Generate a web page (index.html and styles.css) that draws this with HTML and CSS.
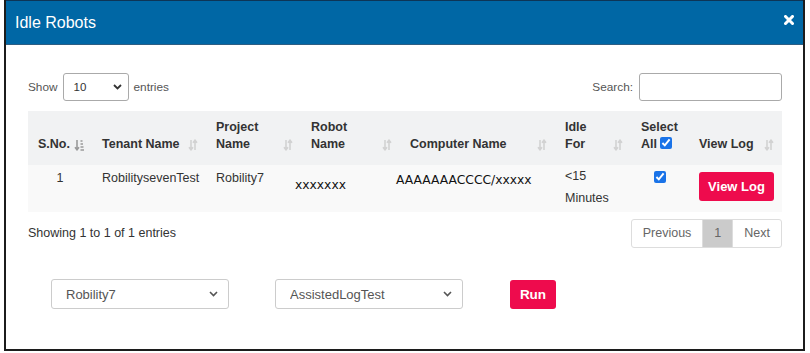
FILE: index.html
```html
<!DOCTYPE html>
<html lang="en">
<head>
    <meta charset="UTF-8">
    <meta name="viewport" content="width=device-width, initial-scale=1.0">
    <title>Idle Robots</title>
    <link rel="stylesheet" href="styles.css">
</head>
<body>
    <div class="modal">
        <div class="modal-header">
            <h4 class="modal-title">Idle Robots</h4>
            <button class="close-btn" aria-label="Close">
                <svg width="10" height="10" viewBox="0 0 10 10"><path d="M1.5 1.5 L8.5 8.5 M8.5 1.5 L1.5 8.5" stroke="#fff" stroke-width="3" stroke-linecap="square"/></svg>
            </button>
        </div>
        <div class="modal-body">
            <div class="dt-top">
                <label class="dt-length">Show
                    <span class="select-wrap small">
                        <select><option>10</option><option>25</option><option>50</option></select>
                        <svg class="chevron" width="9" height="6" viewBox="0 0 9 6"><path d="M1 1 L4.5 4.5 L8 1" fill="none" stroke="#333" stroke-width="1.8"/></svg>
                    </span>
                    entries</label>
                <label class="dt-search">Search: <input type="search"></label>
            </div>

            <table class="robots-table">
                <colgroup>
                    <col style="width:64px"><col style="width:114px"><col style="width:95px"><col style="width:99px">
                    <col style="width:155px"><col style="width:76px"><col style="width:58px"><col style="width:93px">
                </colgroup>
                <thead>
                    <tr>
                        <th>S.No.<svg class="sort" width="10" height="12" viewBox="0 0 10 12"><path d="M3 1 V10.5 M1 8.3 L3 10.8 L5 8.3" fill="none" stroke="#9a9a9a" stroke-width="1.6"/><path d="M6.5 2 H8.5 M6.5 5 H9 M6.5 8 H9.5 M6.5 11 H10" stroke="#9a9a9a" stroke-width="1.5"/></svg></th>
                        <th>Tenant Name<svg class="sort" width="10" height="12" viewBox="0 0 10 12"><path d="M3 1 V10.5 M1 8.3 L3 10.8 L5 8.3 M7 11 V1.5 M5 3.7 L7 1.2 L9 3.7" fill="none" stroke="#d2d2d2" stroke-width="1.6"/></svg></th>
                        <th>Project Name<svg class="sort" width="10" height="12" viewBox="0 0 10 12"><path d="M3 1 V10.5 M1 8.3 L3 10.8 L5 8.3 M7 11 V1.5 M5 3.7 L7 1.2 L9 3.7" fill="none" stroke="#d2d2d2" stroke-width="1.6"/></svg></th>
                        <th>Robot Name<svg class="sort" width="10" height="12" viewBox="0 0 10 12"><path d="M3 1 V10.5 M1 8.3 L3 10.8 L5 8.3 M7 11 V1.5 M5 3.7 L7 1.2 L9 3.7" fill="none" stroke="#d2d2d2" stroke-width="1.6"/></svg></th>
                        <th>Computer Name<svg class="sort" width="10" height="12" viewBox="0 0 10 12"><path d="M3 1 V10.5 M1 8.3 L3 10.8 L5 8.3 M7 11 V1.5 M5 3.7 L7 1.2 L9 3.7" fill="none" stroke="#d2d2d2" stroke-width="1.6"/></svg></th>
                        <th>Idle For<svg class="sort" width="10" height="12" viewBox="0 0 10 12"><path d="M3 1 V10.5 M1 8.3 L3 10.8 L5 8.3 M7 11 V1.5 M5 3.7 L7 1.2 L9 3.7" fill="none" stroke="#d2d2d2" stroke-width="1.6"/></svg></th>
                        <th class="th-select">Select All <input type="checkbox" checked></th>
                        <th>View Log<svg class="sort" width="10" height="12" viewBox="0 0 10 12"><path d="M3 1 V10.5 M1 8.3 L3 10.8 L5 8.3 M7 11 V1.5 M5 3.7 L7 1.2 L9 3.7" fill="none" stroke="#d2d2d2" stroke-width="1.6"/></svg></th>
                    </tr>
                </thead>
                <tbody>
                    <tr>
                        <td class="center">1</td>
                        <td>RobilitysevenTest</td>
                        <td>Robility7</td>
                        <td class="mono robot">xxxxxxx</td>
                        <td class="mono computer">AAAAAAACCCC/xxxxx</td>
                        <td class="idle">&lt;15<br>Minutes</td>
                        <td class="center"><input type="checkbox" checked></td>
                        <td class="td-btn"><button class="btn-red view-log">View Log</button></td>
                    </tr>
                </tbody>
            </table>

            <div class="dt-bottom">
                <div class="dt-info">Showing 1 to 1 of 1 entries</div>
                <div class="pager">
                    <span class="page-item">Previous</span>
                    <span class="page-item active">1</span>
                    <span class="page-item">Next</span>
                </div>
            </div>

            <div class="run-row">
                <span class="select-wrap big project">
                    <select><option>Robility7</option></select>
                    <svg class="chevron" width="9" height="6" viewBox="0 0 9 6"><path d="M1 1 L4.5 4.5 L8 1" fill="none" stroke="#555" stroke-width="1.6"/></svg>
                </span>
                <span class="select-wrap big test">
                    <select><option>AssistedLogTest</option></select>
                    <svg class="chevron" width="9" height="6" viewBox="0 0 9 6"><path d="M1 1 L4.5 4.5 L8 1" fill="none" stroke="#555" stroke-width="1.6"/></svg>
                </span>
                <button class="btn-red run-btn">Run</button>
            </div>
        </div>
    </div>
</body>
</html>
```

FILE: styles.css
```css
* {
    box-sizing: border-box;
}

body {
    margin: 0;
    background-color: #fff;
    font-family: "Liberation Sans", Arial, sans-serif;
    font-size: 12.5px;
    color: #333;
}

.modal {
    margin-left: 4px;
    width: 801px;
    height: 351px;
    border: 2px solid #1c1c1c;
    border-top: none;
}

.modal-header {
    height: 45px;
    background-color: #0067a5;
    border-top: 1px solid #0d3557;
    border-bottom: 1px solid #2d5e83;
    display: flex;
    align-items: center;
    justify-content: space-between;
    padding: 0 9px 0 9px;
}

.modal-title {
    margin: 0;
    color: #fff;
    font-size: 16px;
    font-weight: normal;
}

.close-btn {
    background: none;
    border: none;
    padding: 0;
    margin-top: -6px;
    display: flex;
}

.modal-body {
    padding: 28px 21px 0 22px;
}

/* top controls */
.dt-top {
    display: flex;
    justify-content: space-between;
    align-items: center;
    height: 28px;
    color: #555;
    font-size: 11.8px;
}

.dt-length, .dt-search {
    display: flex;
    align-items: center;
}

.select-wrap {
    position: relative;
    display: inline-block;
}

.select-wrap select {
    appearance: none;
    -webkit-appearance: none;
    background: #fff;
    border: 1px solid #aaa;
    border-radius: 3px;
    font-family: inherit;
    color: #333;
    width: 100%;
    height: 100%;
}

.select-wrap .chevron {
    position: absolute;
    top: 50%;
    margin-top: -3px;
    pointer-events: none;
}

.select-wrap.small {
    width: 66px;
    height: 28px;
    margin: 0 5px 0 5px;
}

.select-wrap.small select {
    font-size: 11.5px;
    padding-left: 10px;
}

.select-wrap.small .chevron {
    right: 7px;
}

.dt-search input {
    width: 143px;
    height: 28px;
    margin-left: 6px;
    border: 1px solid #aaa;
    border-radius: 3px;
}

/* table */
.robots-table {
    margin-top: 10px;
    width: 754px;
    border-collapse: collapse;
    table-layout: fixed;
}

.robots-table th {
    position: relative;
    height: 54px;
    background-color: #f1f2f3;
    text-align: left;
    vertical-align: bottom;
    padding: 0 22px 12px 10px;
    line-height: 17px;
    font-weight: bold;
    color: #333;
}

.robots-table th .sort {
    position: absolute;
    right: 8px;
    bottom: 14px;
}

.robots-table th.th-select {
    padding-right: 6px;
}

.robots-table input[type="checkbox"] {
    width: 12px;
    height: 12px;
    margin: 0;
    vertical-align: -1px;
    accent-color: #1a73e8;
}

.robots-table td {
    height: 47px;
    background-color: #f9f9f9;
    vertical-align: top;
    padding: 5px 10px 0 10px;
    line-height: 17px;
    color: #333;
}

.robots-table td.center {
    text-align: center;
}

.robots-table td.mono {
    font-family: "DejaVu Sans", Verdana, sans-serif;
    font-size: 12.3px;
    color: #111;
    padding-top: 7px;
}

.robots-table td.robot {
    padding-left: 0;
    padding-top: 12px;
    text-indent: -6px;
}

.robots-table td.computer {
    padding-left: 0;
    text-indent: -4px;
}

.robots-table td.idle {
    padding-top: 0;
    line-height: 22px;
}

.robots-table td.td-btn {
    padding: 7px 0 0 10px;
}

.btn-red {
    background-color: #ee0b4d;
    color: #fff;
    border: none;
    border-radius: 3px;
    font-family: inherit;
    font-size: 13px;
    font-weight: bold;
    cursor: pointer;
}

.view-log {
    width: 75px;
    height: 29px;
}

/* info + pager */
.dt-bottom {
    margin-top: 7px;
    display: flex;
    justify-content: space-between;
    align-items: center;
}

.dt-info {
    margin-top: -2px;
}

.pager {
    display: flex;
    border: 1px solid #ddd;
    border-radius: 3px;
    overflow: hidden;
}

.page-item {
    height: 27px;
    line-height: 26px;
    padding: 0 11px;
    color: #666;
    border-left: 1px solid #ddd;
}

.page-item:first-child {
    border-left: none;
}

.page-item.active {
    background-color: #cbcbcb;
}

/* bottom run row */
.run-row {
    margin-top: 31px;
    padding-left: 23px;
    display: flex;
    align-items: center;
}

.select-wrap.big {
    height: 30px;
}

.select-wrap.big select {
    border-color: #ccc;
    font-size: 13px;
    color: #555;
    padding-left: 14px;
}

.select-wrap.big .chevron {
    right: 11px;
}

.select-wrap.project {
    width: 178px;
}

.select-wrap.test {
    width: 188px;
    margin-left: 46px;
}

.run-btn {
    margin-left: 47px;
    width: 46px;
    height: 29px;
    font-size: 13.5px;
}
```
